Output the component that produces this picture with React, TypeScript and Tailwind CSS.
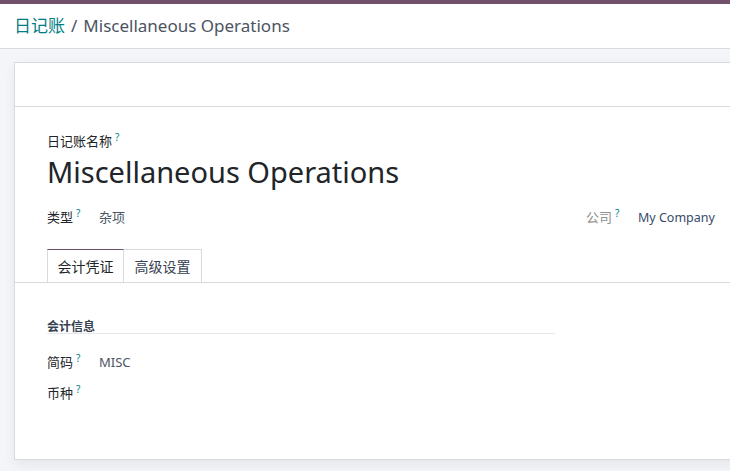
import type { ReactNode } from "react";

const font = { fontFamily: '"Segoe UI", "Noto Sans", "Noto Sans CJK SC", sans-serif' };

function Help() {
  return <sup className="ml-[3px] text-[10px] text-[#017e84]">?</sup>;
}

function Field({ label, value, muted, valueClass }: { label: string; value?: ReactNode; muted?: boolean; valueClass?: string }) {
  return (
    <div className="flex items-baseline text-[13px] leading-[20px]">
      <span className={`w-[52px] shrink-0 ${muted ? "text-[#8f8f8f]" : "text-[#212529]"}`}>
        {label}
        <Help />
      </span>
      <span className={valueClass ?? "text-[#4b5563]"}>{value}</span>
    </div>
  );
}

export default function App() {
  return (
    <div className="flex h-[471px] w-[730px] flex-col overflow-hidden bg-[#f4f5f9]" style={font}>
      <div className="h-[4px] shrink-0 bg-[#71506b]" />
      <div className="flex h-[45px] shrink-0 items-center border-b border-[#d8dadd] bg-white px-[14px] text-[17px]">
        <span className="text-[#017e84]">日记账</span>
        <span className="mx-[6px] text-[#4c5462]">/</span>
        <span className="text-[#4c5462]">Miscellaneous Operations</span>
      </div>
      <div className="pl-[14px] pt-[13px]">
        <div className="h-[398px] w-[740px] border border-[#d8dadd] bg-white shadow-[0_5px_12px_rgba(0,0,0,0.06)]">
          <div className="h-[44px] border-b border-[#d8dadd]" />
          <div className="px-[32px] pt-[25px]">
            <div className="text-[13px] leading-[18px] text-[#212529]">
              日记账名称
              <Help />
            </div>
            <div className="mt-[2px] text-[29px] leading-[40px] text-[#212529]">Miscellaneous Operations</div>
            <div className="mt-[15px] flex">
              <div className="w-[539px]">
                <Field label="类型" value="杂项" />
              </div>
              <Field label="公司" value="My Company" muted valueClass="text-[12.5px] text-[#374a6b]" />
            </div>
            <div className="mt-[21px] flex text-[14px]">
              <div className="flex h-[33px] w-[77px] items-center justify-center border border-b-0 border-[#d8dadd] border-t-[#71506b] text-[#212529]">
                会计凭证
              </div>
              <div className="flex h-[33px] w-[78px] items-center justify-center border border-l-0 border-[#d8dadd] border-b-0 text-[#374151]">
                高级设置
              </div>
            </div>
          </div>
          <div className="border-t border-[#d8dadd]" />
          <div className="px-[32px] pt-[37px]">
            <div className="w-[508px] border-b border-[#e5e7eb] text-[12px] font-semibold leading-[13px] text-[#374151]">
              会计信息
            </div>
            <div className="mt-[18px] flex flex-col gap-[11px]">
              <Field label="简码" value="MISC" />
              <Field label="币种" />
            </div>
          </div>
        </div>
      </div>
    </div>
  );
}
